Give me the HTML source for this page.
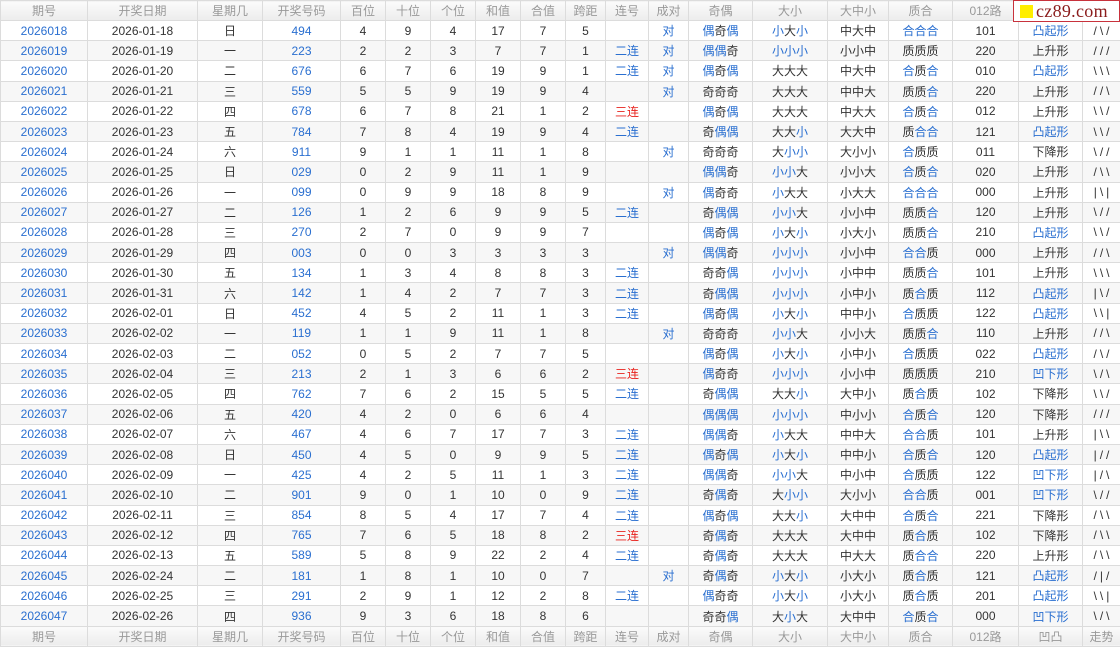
<!DOCTYPE html>
<html><head><meta charset="utf-8">
<style>
*{margin:0;padding:0;box-sizing:border-box}
body{width:1120px;height:646px;overflow:hidden;background:#fff;font-family:"Liberation Sans","Noto Sans CJK SC",sans-serif;font-size:12px;color:#333;position:relative}
table{border-collapse:collapse;table-layout:fixed;width:1120px}
td,th{border:1px solid #dcdcdc;text-align:center;white-space:nowrap;overflow:hidden;padding:0}
th{height:20px;font-weight:normal;color:#999;background:linear-gradient(#fbfbfb,#ececec)}
td{height:20.2px}
tbody td:last-child{letter-spacing:3px;padding-left:3px}
tbody tr:nth-child(even) td{background:#f7f7f7}
.b{color:#2a6fd0}
.r{color:#e8231e}
.logo{position:absolute;left:1013px;top:0;width:107px;height:22px;border:1px solid #c8323c;background:#fff;display:flex;align-items:center}
.logo i{display:block;width:13px;height:13px;background:#ffee00;margin-left:6px;margin-right:3px}
.logo span{font-family:"Liberation Serif","DejaVu Serif",serif;font-size:18px;color:#8b1c1c;letter-spacing:.3px}
</style></head><body>
<table>
<colgroup><col style="width:87px"><col style="width:110px"><col style="width:65px"><col style="width:78px"><col style="width:45px"><col style="width:45px"><col style="width:45px"><col style="width:45px"><col style="width:45px"><col style="width:40px"><col style="width:43px"><col style="width:40px"><col style="width:64px"><col style="width:75px"><col style="width:61px"><col style="width:64px"><col style="width:66px"><col style="width:64px"><col style="width:38px"></colgroup>
<thead><tr><th>期号</th><th>开奖日期</th><th>星期几</th><th>开奖号码</th><th>百位</th><th>十位</th><th>个位</th><th>和值</th><th>合值</th><th>跨距</th><th>连号</th><th>成对</th><th>奇偶</th><th>大小</th><th>大中小</th><th>质合</th><th>012路</th><th>凹凸</th><th>走势</th></tr></thead>
<tbody id="tb">
<tr><td>2026018</td><td>2026-01-18</td><td>日</td><td>494</td><td>4</td><td>9</td><td>4</td><td>17</td><td>7</td><td>5</td><td></td><td>对</td><td>偶奇偶</td><td>小大小</td><td>中大中</td><td>合合合</td><td>101</td><td>凸起形</td><td>/\/</td></tr>
<tr><td>2026019</td><td>2026-01-19</td><td>一</td><td>223</td><td>2</td><td>2</td><td>3</td><td>7</td><td>7</td><td>1</td><td>二连</td><td>对</td><td>偶偶奇</td><td>小小小</td><td>小小中</td><td>质质质</td><td>220</td><td>上升形</td><td>///</td></tr>
<tr><td>2026020</td><td>2026-01-20</td><td>二</td><td>676</td><td>6</td><td>7</td><td>6</td><td>19</td><td>9</td><td>1</td><td>二连</td><td>对</td><td>偶奇偶</td><td>大大大</td><td>中大中</td><td>合质合</td><td>010</td><td>凸起形</td><td>\\\</td></tr>
<tr><td>2026021</td><td>2026-01-21</td><td>三</td><td>559</td><td>5</td><td>5</td><td>9</td><td>19</td><td>9</td><td>4</td><td></td><td>对</td><td>奇奇奇</td><td>大大大</td><td>中中大</td><td>质质合</td><td>220</td><td>上升形</td><td>//\</td></tr>
<tr><td>2026022</td><td>2026-01-22</td><td>四</td><td>678</td><td>6</td><td>7</td><td>8</td><td>21</td><td>1</td><td>2</td><td>三连</td><td></td><td>偶奇偶</td><td>大大大</td><td>中大大</td><td>合质合</td><td>012</td><td>上升形</td><td>\\/</td></tr>
<tr><td>2026023</td><td>2026-01-23</td><td>五</td><td>784</td><td>7</td><td>8</td><td>4</td><td>19</td><td>9</td><td>4</td><td>二连</td><td></td><td>奇偶偶</td><td>大大小</td><td>大大中</td><td>质合合</td><td>121</td><td>凸起形</td><td>\\/</td></tr>
<tr><td>2026024</td><td>2026-01-24</td><td>六</td><td>911</td><td>9</td><td>1</td><td>1</td><td>11</td><td>1</td><td>8</td><td></td><td>对</td><td>奇奇奇</td><td>大小小</td><td>大小小</td><td>合质质</td><td>011</td><td>下降形</td><td>\//</td></tr>
<tr><td>2026025</td><td>2026-01-25</td><td>日</td><td>029</td><td>0</td><td>2</td><td>9</td><td>11</td><td>1</td><td>9</td><td></td><td></td><td>偶偶奇</td><td>小小大</td><td>小小大</td><td>合质合</td><td>020</td><td>上升形</td><td>/\\</td></tr>
<tr><td>2026026</td><td>2026-01-26</td><td>一</td><td>099</td><td>0</td><td>9</td><td>9</td><td>18</td><td>8</td><td>9</td><td></td><td>对</td><td>偶奇奇</td><td>小大大</td><td>小大大</td><td>合合合</td><td>000</td><td>上升形</td><td>|\|</td></tr>
<tr><td>2026027</td><td>2026-01-27</td><td>二</td><td>126</td><td>1</td><td>2</td><td>6</td><td>9</td><td>9</td><td>5</td><td>二连</td><td></td><td>奇偶偶</td><td>小小大</td><td>小小中</td><td>质质合</td><td>120</td><td>上升形</td><td>\//</td></tr>
<tr><td>2026028</td><td>2026-01-28</td><td>三</td><td>270</td><td>2</td><td>7</td><td>0</td><td>9</td><td>9</td><td>7</td><td></td><td></td><td>偶奇偶</td><td>小大小</td><td>小大小</td><td>质质合</td><td>210</td><td>凸起形</td><td>\\/</td></tr>
<tr><td>2026029</td><td>2026-01-29</td><td>四</td><td>003</td><td>0</td><td>0</td><td>3</td><td>3</td><td>3</td><td>3</td><td></td><td>对</td><td>偶偶奇</td><td>小小小</td><td>小小中</td><td>合合质</td><td>000</td><td>上升形</td><td>//\</td></tr>
<tr><td>2026030</td><td>2026-01-30</td><td>五</td><td>134</td><td>1</td><td>3</td><td>4</td><td>8</td><td>8</td><td>3</td><td>二连</td><td></td><td>奇奇偶</td><td>小小小</td><td>小中中</td><td>质质合</td><td>101</td><td>上升形</td><td>\\\</td></tr>
<tr><td>2026031</td><td>2026-01-31</td><td>六</td><td>142</td><td>1</td><td>4</td><td>2</td><td>7</td><td>7</td><td>3</td><td>二连</td><td></td><td>奇偶偶</td><td>小小小</td><td>小中小</td><td>质合质</td><td>112</td><td>凸起形</td><td>|\/</td></tr>
<tr><td>2026032</td><td>2026-02-01</td><td>日</td><td>452</td><td>4</td><td>5</td><td>2</td><td>11</td><td>1</td><td>3</td><td>二连</td><td></td><td>偶奇偶</td><td>小大小</td><td>中中小</td><td>合质质</td><td>122</td><td>凸起形</td><td>\\|</td></tr>
<tr><td>2026033</td><td>2026-02-02</td><td>一</td><td>119</td><td>1</td><td>1</td><td>9</td><td>11</td><td>1</td><td>8</td><td></td><td>对</td><td>奇奇奇</td><td>小小大</td><td>小小大</td><td>质质合</td><td>110</td><td>上升形</td><td>//\</td></tr>
<tr><td>2026034</td><td>2026-02-03</td><td>二</td><td>052</td><td>0</td><td>5</td><td>2</td><td>7</td><td>7</td><td>5</td><td></td><td></td><td>偶奇偶</td><td>小大小</td><td>小中小</td><td>合质质</td><td>022</td><td>凸起形</td><td>/\/</td></tr>
<tr><td>2026035</td><td>2026-02-04</td><td>三</td><td>213</td><td>2</td><td>1</td><td>3</td><td>6</td><td>6</td><td>2</td><td>三连</td><td></td><td>偶奇奇</td><td>小小小</td><td>小小中</td><td>质质质</td><td>210</td><td>凹下形</td><td>\/\</td></tr>
<tr><td>2026036</td><td>2026-02-05</td><td>四</td><td>762</td><td>7</td><td>6</td><td>2</td><td>15</td><td>5</td><td>5</td><td>二连</td><td></td><td>奇偶偶</td><td>大大小</td><td>大中小</td><td>质合质</td><td>102</td><td>下降形</td><td>\\/</td></tr>
<tr><td>2026037</td><td>2026-02-06</td><td>五</td><td>420</td><td>4</td><td>2</td><td>0</td><td>6</td><td>6</td><td>4</td><td></td><td></td><td>偶偶偶</td><td>小小小</td><td>中小小</td><td>合质合</td><td>120</td><td>下降形</td><td>///</td></tr>
<tr><td>2026038</td><td>2026-02-07</td><td>六</td><td>467</td><td>4</td><td>6</td><td>7</td><td>17</td><td>7</td><td>3</td><td>二连</td><td></td><td>偶偶奇</td><td>小大大</td><td>中中大</td><td>合合质</td><td>101</td><td>上升形</td><td>|\\</td></tr>
<tr><td>2026039</td><td>2026-02-08</td><td>日</td><td>450</td><td>4</td><td>5</td><td>0</td><td>9</td><td>9</td><td>5</td><td>二连</td><td></td><td>偶奇偶</td><td>小大小</td><td>中中小</td><td>合质合</td><td>120</td><td>凸起形</td><td>|//</td></tr>
<tr><td>2026040</td><td>2026-02-09</td><td>一</td><td>425</td><td>4</td><td>2</td><td>5</td><td>11</td><td>1</td><td>3</td><td>二连</td><td></td><td>偶偶奇</td><td>小小大</td><td>中小中</td><td>合质质</td><td>122</td><td>凹下形</td><td>|/\</td></tr>
<tr><td>2026041</td><td>2026-02-10</td><td>二</td><td>901</td><td>9</td><td>0</td><td>1</td><td>10</td><td>0</td><td>9</td><td>二连</td><td></td><td>奇偶奇</td><td>大小小</td><td>大小小</td><td>合合质</td><td>001</td><td>凹下形</td><td>\//</td></tr>
<tr><td>2026042</td><td>2026-02-11</td><td>三</td><td>854</td><td>8</td><td>5</td><td>4</td><td>17</td><td>7</td><td>4</td><td>二连</td><td></td><td>偶奇偶</td><td>大大小</td><td>大中中</td><td>合质合</td><td>221</td><td>下降形</td><td>/\\</td></tr>
<tr><td>2026043</td><td>2026-02-12</td><td>四</td><td>765</td><td>7</td><td>6</td><td>5</td><td>18</td><td>8</td><td>2</td><td>三连</td><td></td><td>奇偶奇</td><td>大大大</td><td>大中中</td><td>质合质</td><td>102</td><td>下降形</td><td>/\\</td></tr>
<tr><td>2026044</td><td>2026-02-13</td><td>五</td><td>589</td><td>5</td><td>8</td><td>9</td><td>22</td><td>2</td><td>4</td><td>二连</td><td></td><td>奇偶奇</td><td>大大大</td><td>中大大</td><td>质合合</td><td>220</td><td>上升形</td><td>/\\</td></tr>
<tr><td>2026045</td><td>2026-02-24</td><td>二</td><td>181</td><td>1</td><td>8</td><td>1</td><td>10</td><td>0</td><td>7</td><td></td><td>对</td><td>奇偶奇</td><td>小大小</td><td>小大小</td><td>质合质</td><td>121</td><td>凸起形</td><td>/|/</td></tr>
<tr><td>2026046</td><td>2026-02-25</td><td>三</td><td>291</td><td>2</td><td>9</td><td>1</td><td>12</td><td>2</td><td>8</td><td>二连</td><td></td><td>偶奇奇</td><td>小大小</td><td>小大小</td><td>质合质</td><td>201</td><td>凸起形</td><td>\\|</td></tr>
<tr><td>2026047</td><td>2026-02-26</td><td>四</td><td>936</td><td>9</td><td>3</td><td>6</td><td>18</td><td>8</td><td>6</td><td></td><td></td><td>奇奇偶</td><td>大小大</td><td>大中中</td><td>合质合</td><td>000</td><td>凹下形</td><td>\/\</td></tr>
</tbody>
<tfoot><tr><th>期号</th><th>开奖日期</th><th>星期几</th><th>开奖号码</th><th>百位</th><th>十位</th><th>个位</th><th>和值</th><th>合值</th><th>跨距</th><th>连号</th><th>成对</th><th>奇偶</th><th>大小</th><th>大中小</th><th>质合</th><th>012路</th><th>凹凸</th><th>走势</th></tr></tfoot>
</table>
<div class="logo"><i></i><span>cz89.com</span></div>
<script>
var rows=document.querySelectorAll('#tb tr');
rows.forEach(function(r){
 var c=r.cells;
 c[0].className='b';c[3].className='b';c[11].className='b';
 if(c[10].textContent=='三连')c[10].className='r';else c[10].className='b';
 if(c[17].textContent=='凸起形'||c[17].textContent=='凹下形')c[17].className='b';
 [[12,'偶'],[13,'小'],[15,'合']].forEach(function(p){
  var t=c[p[0]].textContent,h='';
  for(var i=0;i<t.length;i++){h+=t[i]==p[1]?'<span class="b">'+t[i]+'</span>':t[i];}
  c[p[0]].innerHTML=h;
 });
});
</script>
</body></html>
